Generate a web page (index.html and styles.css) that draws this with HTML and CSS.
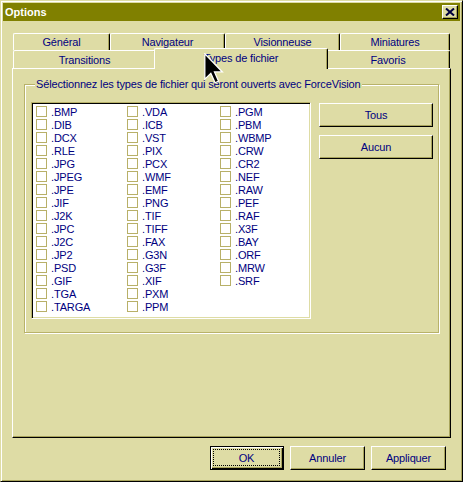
FILE: index.html
```html
<!DOCTYPE html>
<html lang="fr">
<head>
<meta charset="utf-8">
<title>Options</title>
<link rel="stylesheet" href="styles.css">
</head>
<body>
<div class="window">
  <div class="titlebar">
    <span class="title">Options</span>
    <span class="close"><svg width="10" height="8" viewBox="0 0 10 8"><path d="M1 0.5 L9 7.5 M9 0.5 L1 7.5" stroke="#000040" stroke-width="2" fill="none"/></svg></span>
  </div>
  <div class="body">
    <div class="tabs">
      <div class="tabrow">
        <div class="tab t-gen">Général</div>
        <div class="tab t-nav">Navigateur</div>
        <div class="tab t-vis">Visionneuse</div>
        <div class="tab t-min">Miniatures</div>
      </div>
      <div class="tabrow">
        <div class="tab t-tra">Transitions</div>
        <div class="tab t-typ selected">Types de fichier</div>
        <div class="tab t-fav">Favoris</div>
      </div>
    </div>
    <div class="panel">
      <fieldset class="group">
        <legend>Sélectionnez les types de fichier qui seront ouverts avec ForceVision</legend>
        <div class="group-inner">
          <div class="list">
            <div class="item"><span class="cb"></span>.BMP</div>
            <div class="item"><span class="cb"></span>.DIB</div>
            <div class="item"><span class="cb"></span>.DCX</div>
            <div class="item"><span class="cb"></span>.RLE</div>
            <div class="item"><span class="cb"></span>.JPG</div>
            <div class="item"><span class="cb"></span>.JPEG</div>
            <div class="item"><span class="cb"></span>.JPE</div>
            <div class="item"><span class="cb"></span>.JIF</div>
            <div class="item"><span class="cb"></span>.J2K</div>
            <div class="item"><span class="cb"></span>.JPC</div>
            <div class="item"><span class="cb"></span>.J2C</div>
            <div class="item"><span class="cb"></span>.JP2</div>
            <div class="item"><span class="cb"></span>.PSD</div>
            <div class="item"><span class="cb"></span>.GIF</div>
            <div class="item"><span class="cb"></span>.TGA</div>
            <div class="item"><span class="cb"></span>.TARGA</div>
            <div class="item"><span class="cb"></span>.VDA</div>
            <div class="item"><span class="cb"></span>.ICB</div>
            <div class="item"><span class="cb"></span>.VST</div>
            <div class="item"><span class="cb"></span>.PIX</div>
            <div class="item"><span class="cb"></span>.PCX</div>
            <div class="item"><span class="cb"></span>.WMF</div>
            <div class="item"><span class="cb"></span>.EMF</div>
            <div class="item"><span class="cb"></span>.PNG</div>
            <div class="item"><span class="cb"></span>.TIF</div>
            <div class="item"><span class="cb"></span>.TIFF</div>
            <div class="item"><span class="cb"></span>.FAX</div>
            <div class="item"><span class="cb"></span>.G3N</div>
            <div class="item"><span class="cb"></span>.G3F</div>
            <div class="item"><span class="cb"></span>.XIF</div>
            <div class="item"><span class="cb"></span>.PXM</div>
            <div class="item"><span class="cb"></span>.PPM</div>
            <div class="item"><span class="cb"></span>.PGM</div>
            <div class="item"><span class="cb"></span>.PBM</div>
            <div class="item"><span class="cb"></span>.WBMP</div>
            <div class="item"><span class="cb"></span>.CRW</div>
            <div class="item"><span class="cb"></span>.CR2</div>
            <div class="item"><span class="cb"></span>.NEF</div>
            <div class="item"><span class="cb"></span>.RAW</div>
            <div class="item"><span class="cb"></span>.PEF</div>
            <div class="item"><span class="cb"></span>.RAF</div>
            <div class="item"><span class="cb"></span>.X3F</div>
            <div class="item"><span class="cb"></span>.BAY</div>
            <div class="item"><span class="cb"></span>.ORF</div>
            <div class="item"><span class="cb"></span>.MRW</div>
            <div class="item"><span class="cb"></span>.SRF</div>
          </div>
          <div class="side">
            <div class="btn side-btn">Tous</div>
            <div class="btn side-btn">Aucun</div>
          </div>
        </div>
      </fieldset>
    </div>
    <div class="footer">
      <div class="btn default"><span class="focus">OK</span></div>
      <div class="btn">Annuler</div>
      <div class="btn">Appliquer</div>
    </div>
  </div>
  <svg class="cursor" width="20" height="31" viewBox="0 0 12.6 19.6"><path d="M0.5 0.5 L0.5 16.5 L4.3 12.9 L7 18.8 L9.2 17.8 L6.6 12 L11.6 12 Z" fill="#000" stroke="#fff" stroke-width="0.8" stroke-linejoin="miter"/></svg>
</div>
</body>
</html>
```

FILE: styles.css
```css
* { box-sizing: border-box; }
html, body { margin: 0; padding: 0; background: #dedca5; }
body {
  font-family: "Liberation Sans", Arial, sans-serif;
  font-size: 11px;
  letter-spacing: -0.15px;
  color: #000080;
}
.window {
  position: relative;
  width: 463px;
  height: 482px;
  background: #dedca5;
  border: 1px solid;
  border-color: #dedca5 #000 #000 #dedca5;
  box-shadow: inset 1px 1px 0 #fff, inset -1px -1px 0 #a8a45c;
  padding: 2px;
  display: flex;
  flex-direction: column;
}
.titlebar {
  height: 18px;
  background: #808000;
  display: flex;
  align-items: center;
  justify-content: space-between;
  padding: 0 2px 0 2px;
}
.title {
  color: #fff;
  font-weight: bold;
  font-size: 11px;
  letter-spacing: 0;
}
.close {
  width: 16px;
  height: 14px;
  background: #dedca5;
  border: 1px solid;
  border-color: #fff #000 #000 #fff;
  box-shadow: inset -1px -1px 0 #a8a45c;
  display: flex;
  align-items: center;
  justify-content: center;
  padding-bottom: 1px;
}
.close svg { display: block; }
.body {
  flex: 1;
  display: flex;
  flex-direction: column;
  padding: 12px 9px 0 9px;
}
.tabs { padding-left: 1px; }
.tabrow { display: flex; }
.tab {
  height: 17px;
  border-top: 1px solid #fff;
  border-left: 1px solid #fff;
  border-right: 1px solid #000;
  border-radius: 2px 2px 0 0;
  box-shadow: inset -1px 0 0 #a8a45c;
  display: flex;
  align-items: center;
  justify-content: center;
  background: #dedca5;
  white-space: nowrap;
}
.tabrow + .tabrow .tab { height: 18px; }
.t-gen { width: 97px; }
.t-nav { width: 115px; }
.t-vis { width: 115px; }
.t-min { width: 110px; }
.t-tra { width: 143px; }
.t-typ { width: 170px; }
.t-fav { width: 124px; }
.tabrow + .tabrow .tab.selected {
  position: relative;
  z-index: 2;
  height: 21px;
  margin: -2px -2px -1px -2px;
  width: 174px;
  padding-bottom: 3px;
}
.panel {
  height: 370px;
  border: 1px solid;
  border-color: #fff #000 #000 #fff;
  box-shadow: inset -1px -1px 0 #a8a45c;
  padding: 9px 11px 0 11px;
}
.group {
  margin: 0;
  padding: 11px 5px 6px 6px;
  border: 1px solid #b8b26a;
  box-shadow: inset 1px 1px 0 #fff, 1px 1px 0 #fff;
  height: 255px;
  min-width: 0;
}
.group legend {
  padding: 0 1px;
  margin-left: 4px;
  line-height: 13px;
  background: #dedca5;
}
.group-inner {
  display: flex;
  gap: 8px;
}
.list {
  width: 280px;
  height: 217px;
  background: #fff;
  border: 1px solid;
  border-color: #b8b26a #fff #fff #b8b26a;
  box-shadow: inset 1px 1px 0 #000, inset -1px -1px 0 #dedca5;
  padding: 2px 0 0 4px;
  display: grid;
  grid-auto-flow: column;
  grid-template-rows: repeat(16, 13px);
  grid-template-columns: 91px 93px 92px;
}
.item {
  display: flex;
  align-items: center;
  white-space: nowrap;
}
.cb {
  width: 11px;
  height: 11px;
  border: 1px solid #b8b068;
  background: #fff;
  margin-right: 4px;
  flex: none;
}
.side {
  display: flex;
  flex-direction: column;
  gap: 8px;
  padding-top: 1px;
}
.btn {
  width: 75px;
  height: 24px;
  background: #dedca5;
  border: 1px solid;
  border-color: #fff #000 #000 #fff;
  box-shadow: inset -1px -1px 0 #a8a45c;
  display: flex;
  align-items: center;
  justify-content: center;
}
.side-btn { width: 114px; height: 24px; }
.footer {
  display: flex;
  justify-content: flex-end;
  gap: 6px;
  margin-top: 8px;
  padding-right: 5px;
}
.btn.default {
  width: 74px;
  border: 1px solid #000;
  box-shadow: inset 1px 1px 0 #fff, inset -1px -1px 0 #000, inset -2px -2px 0 #a8a45c;
  padding: 2px 3px 3px 2px;
}
.focus {
  flex: 1;
  align-self: stretch;
  display: flex;
  align-items: center;
  justify-content: center;
  border: 1px dotted #000;
}
.cursor {
  position: absolute;
  left: 203px;
  top: 52px;
  z-index: 5;
}
```
